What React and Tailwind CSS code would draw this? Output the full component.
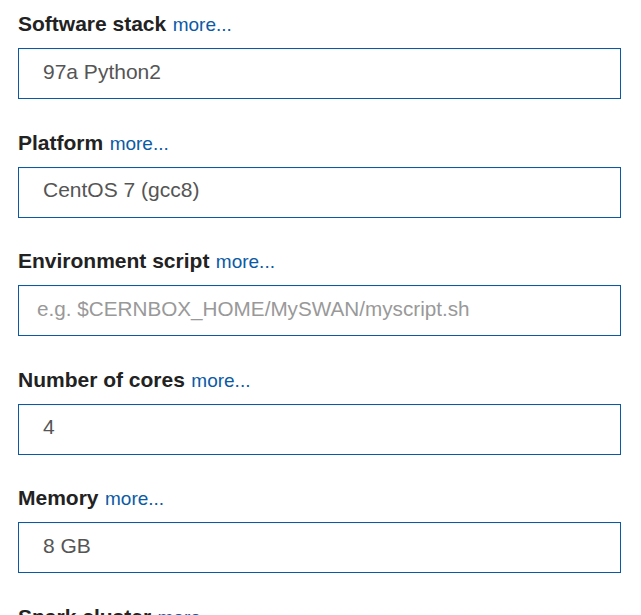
const fields = [
  { label: "Software stack", value: "97a Python2" },
  { label: "Platform", value: "CentOS 7 (gcc8)" },
  { label: "Environment script", placeholder: "e.g. $CERNBOX_HOME/MySWAN/myscript.sh" },
  { label: "Number of cores", value: "4" },
  { label: "Memory", value: "8 GB" },
  { label: "Spark cluster", value: "" },
];

export default function App() {
  return (
    <div className="bg-white min-h-screen w-[641px] h-[615px] overflow-hidden px-[18px] pt-[10px] font-['Liberation_Sans',Arial,sans-serif]">
      {fields.map((f, i) => (
        <div key={i} className="mb-[29.5px]">
          <div className="h-[28px] leading-[28px] mb-[10px] whitespace-nowrap">
            <span className="text-[21px] font-bold text-[#222]">{f.label}</span>{" "}
            <a href="#" className="ml-[2px] text-[19px] text-[#0b5aa5]">more...</a>
          </div>
          <div
            className={`w-[603px] h-[51px] border border-[#0b58a3] bg-white shadow-[inset_0_1px_1px_rgba(0,0,0,0.04)] flex items-center pb-[4px] ${
              f.value ? "pl-[24px] text-[21px]" : "pl-[18px] text-[20.7px]"
            }`}
          >
            {f.value ? (
              <span className="text-[#555]">{f.value}</span>
            ) : (
              <span className="text-[#999]">{f.placeholder}</span>
            )}
          </div>
        </div>
      ))}
    </div>
  );
}
